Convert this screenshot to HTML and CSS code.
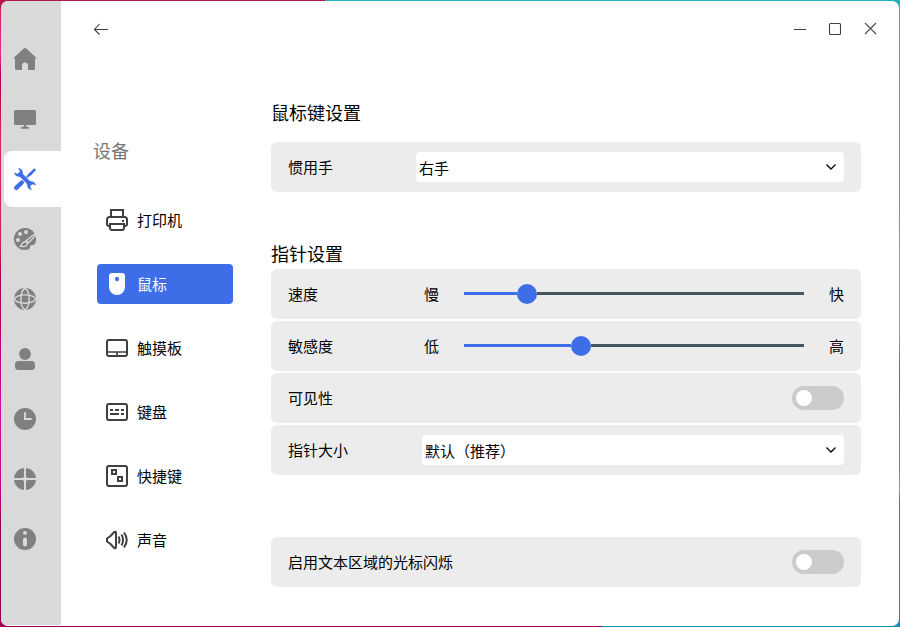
FILE: index.html
```html
<!DOCTYPE html>
<html lang="zh-CN">
<head>
<meta charset="utf-8">
<title>设备</title>
<link rel="stylesheet" href="styles.css">
</head>
<body>
<div class="window">
  <aside class="rail">
    <a class="tab"><svg width="24" height="24" viewBox="0 0 24 24"><path fill="currentColor" d="M12 1Q12.700 1 13.300 1.600L22.500 10q.800 1 .300 1.800L22 12v9.500a1.500 1.500 0 0 1-1.500 1.500H15v-4.500a3 3 0 0 0-6 0V23H3.500A1.500 1.500 0 0 1 2 21.500V12l-.800-.200Q.700 11 1.500 10l9.200-8.400Q11.300 1 12 1Z"/></svg></a>
    <a class="tab"><svg width="24" height="24" viewBox="0 0 24 24"><rect x="1" y="3" width="22" height="15" rx="1.500" fill="currentColor"/><path fill="currentColor" d="M11 18h2v1.500l3 .500v1.700H8V20l3-.500z"/></svg></a>
    <a class="tab active"><svg width="24" height="24" viewBox="0 0 24 24"><path d="M6 6 18 18" stroke="currentColor" stroke-width="4"/><path d="M3.200 20.800l5.600-5.300" stroke="currentColor" stroke-width="4.400" stroke-linecap="round"/><path d="m13.800 10.200 3-3" stroke="currentColor" stroke-width="2"/><path d="m16.500 5.700 4.800-4.500L23 2.700 18.500 8l-2.300 1.300-1.500-1.500Z" fill="currentColor"/><path d="M5 1A5 5 0 0 1 9.800 6.800L7 9.800A5.300 5.300 0 0 1 1 5.200L3.600 6.800 6.400 6 6.700 3.500ZM19 23a5 5 0 0 1-4.800-5.800l2.800-3A5.300 5.300 0 0 1 23 18.800l-2.600-1.600-2.800.800-.300 2.500Z" fill="currentColor"/></svg></a>
    <a class="tab"><svg width="24" height="24" viewBox="0 0 24 24"><path d="M12 1a11 11 0 1 0 4 21.200c1.700-.800.500-2.700 1.700-3.700 1.300-1 3.600.500 4.500-2.200A11 11 0 0 0 12 1Z" fill="currentColor"/><g class="cut"><circle cx="13" cy="5" r="2"/><circle cx="7" cy="7" r="2"/><circle cx="5" cy="13" r="2"/></g><path class="cutline" stroke-width="1.300" d="M23 6 13.300 13.500l2.200 2.200L23 8M12.500 14.500c-3-.300-3 3-5.300 4.700 3 1 7 .300 7.300-2.700Z"/></svg></a>
    <a class="tab"><svg width="24" height="24" viewBox="0 0 24 24"><circle cx="12" cy="12" r="11" fill="currentColor"/><g class="cutline" stroke-width="1.350"><ellipse cx="12" cy="12" rx="4.200" ry="10.300"/><ellipse cx="12" cy="12" rx="10.300" ry="4.200"/></g></svg></a>
    <a class="tab"><svg width="24" height="24" viewBox="0 0 24 24" fill="currentColor"><circle cx="12" cy="7" r="5.900"/><rect x="2" y="14" width="20" height="9" rx="3.500"/></svg></a>
    <a class="tab"><svg width="24" height="24" viewBox="0 0 24 24"><circle cx="12" cy="12" r="11" fill="currentColor"/><path class="cutline" stroke-width="1.900" stroke-linecap="round" d="M12 6v6h6"/></svg></a>
    <a class="tab"><svg width="24" height="24" viewBox="0 0 24 24"><circle cx="12" cy="12" r="11" fill="currentColor"/><path class="cutline" stroke-width="2" d="M12 1v22M1 12h22"/><circle class="cut" cx="12" cy="12" r="2.300"/></svg></a>
    <a class="tab"><svg width="24" height="24" viewBox="0 0 24 24"><circle cx="12" cy="12" r="11" fill="currentColor"/><g class="cut"><circle cx="12" cy="6" r="2"/><rect x="10" y="10.500" width="4" height="9" rx="2"/></g></svg></a>
  </aside>

  <main class="content">
    <header class="titlebar">
      <svg class="back" width="16" height="14" viewBox="0 0 16 14"><path d="M15 7.500H1.500M6.500 2 1.500 7.500 6.500 12.500"/></svg>
      <div class="controls">
        <svg width="14" height="14" viewBox="0 0 14 14"><path d="M1 7.500h12"/></svg>
        <svg width="14" height="14" viewBox="0 0 14 14"><rect x="1.500" y="1.500" width="11" height="11" rx="1"/></svg>
        <svg class="close" width="14" height="14" viewBox="0 0 14 14"><path d="m2 1 11 11m0-11-11 11"/></svg>
      </div>
    </header>

    <div class="columns">
      <nav class="nav">
        <h1>设备</h1>
        <a class="item"><svg width="24" height="24" viewBox="0 0 24 24"><path d="M6 9V2h12v7M5 18H4a2 2 0 0 1-2-2v-4.500A2.500 2.500 0 0 1 4.500 9h15a2.500 2.500 0 0 1 2.500 2.500V16a2 2 0 0 1-2 2h-1"/><path d="M5 16h14v4a2 2 0 0 1-2 2H7a2 2 0 0 1-2-2Z"/><path d="M17 13h2"/></svg><span>打印机</span></a>
        <a class="item selected"><svg width="24" height="24" viewBox="0 0 24 24"><path class="solid" d="M7 1h10a3 3 0 0 1 3 3v11a8 8 0 0 1-16 0V4a3 3 0 0 1 3-3Z"/><ellipse class="wheel" cx="12" cy="7" rx="2" ry="2.200"/></svg><span>鼠标</span></a>
        <a class="item"><svg width="24" height="24" viewBox="0 0 24 24"><rect x="2" y="4" width="20" height="16" rx="2"/><path stroke-width="1.700" d="M2 16h20M12 16v4"/></svg><span>触摸板</span></a>
        <a class="item"><svg width="24" height="24" viewBox="0 0 24 24"><rect x="2" y="4" width="20" height="16" rx="2"/><path d="M5 10h3M10 10h4M16 10h3M5 14h9M16 14h3"/></svg><span>键盘</span></a>
        <a class="item"><svg width="24" height="24" viewBox="0 0 24 24"><rect x="2" y="2" width="20" height="20" rx="2"/><rect x="7" y="6" width="4" height="4"/><rect x="13" y="13" width="4" height="4"/></svg><span>快捷键</span></a>
        <a class="item"><svg width="24" height="24" viewBox="0 0 24 24"><path stroke-linejoin="round" d="M5.500 8 9 4.200Q11 3 11 5v14q0 2-2 .800L5.500 16 2 13.500v-3Z"/><path d="M13.500 8.500q2 3.500 0 7M16.500 6.500q3 5.500 0 11M19 4.500q5.500 7.500 0 15"/></svg><span>声音</span></a>
      </nav>

      <div class="settings">
        <section class="group buttons">
          <h2>鼠标键设置</h2>
          <div class="row"><span class="label">惯用手</span><div class="select wide"><span>右手</span><svg width="12" height="8" viewBox="0 0 12 8"><path d="m1.500 1.500 4.500 4.500 4.500-4.500"/></svg></div></div>
        </section>
        <section class="group pointer">
          <h2>指针设置</h2>
          <div class="row"><span class="label">速度</span><span class="low">慢</span><div class="slider speed"><i class="fill"></i><b class="knob"></b><i class="rest"></i></div><span class="high">快</span></div>
          <div class="row"><span class="label">敏感度</span><span class="low">低</span><div class="slider sense"><i class="fill"></i><b class="knob"></b><i class="rest"></i></div><span class="high">高</span></div>
          <div class="row"><span class="label">可见性</span><div class="toggle"><i></i></div></div>
          <div class="row"><span class="label">指针大小</span><div class="select"><span>默认（推荐）</span><svg width="12" height="8" viewBox="0 0 12 8"><path d="m1.500 1.500 4.500 4.500 4.500-4.500"/></svg></div></div>
        </section>
        <section class="group">
          <div class="row"><span class="label">启用文本区域的光标闪烁</span><div class="toggle"><i></i></div></div>
        </section>
      </div>
    </div>
  </main>
</div>
</body>
</html>
```
FILE: styles.css
```css
* { box-sizing: border-box; }

body {
  margin: 0;
  height: 627px;
  padding: 1px;
  overflow: hidden;
  font: 15px/22px "Noto Sans CJK SC", sans-serif;
  color: #000;
  background:
    linear-gradient(90deg, #b01550 0 325px, #26b0b8 325px) top / 100% 8px no-repeat,
    linear-gradient(90deg, #a00058 0 602px, #1095b5 602px) bottom / 100% 8px no-repeat,
    linear-gradient(#2bb0b8 0 200px, #a8a070 270px 330px, #4d7080 375px, #c06848 420px 470px, #b59a60 490px, #1090b0 500px) right / 8px 100% no-repeat,
    linear-gradient(#c81e58, #e0309a 55px, #b00055 75px, #d4285f 140px, #c02060 250px, #a0004f 280px, #d00c9c 400px, #c80c90 480px, #950050 530px);
}

h1, h2 {
  margin: 0;
  font-size: 18px;
  font-weight: 400;
  line-height: 26px;
}

svg { display: block; flex: none; }

.window {
  display: flex;
  height: 625px;
  border-radius: 7px;
  overflow: hidden;
  background: #fff;
}

.rail {
  display: flex;
  flex-direction: column;
  gap: 4px;
  width: 60px;
  height: 624px;
  padding: 30px 0 0 3px;
  background: #d9d9d9;
  color: #808080;
}

.tab {
  display: flex;
  align-items: center;
  height: 56px;
  padding-left: 9px;
  border-radius: 8px 0 0 8px;
}

.tab.active { background: #fff; color: #3d6de7; }
.cut { fill: #d9d9d9; }
.cutline { fill: none; stroke: #d9d9d9; }

.content { flex: 1; }

.titlebar {
  display: flex;
  justify-content: space-between;
  align-items: center;
  height: 56px;
  padding: 0 22px 0 32px;
}

.titlebar svg { fill: none; stroke: #404040; stroke-width: 1.100; }
.controls { display: flex; gap: 21px; }
.titlebar .close { stroke: #505050; stroke-width: 1.200; }

.columns { display: flex; }

.nav {
  width: 210px;
  padding: 80px 38px 0 36px;
}

.nav h1 {
  margin: 0 0 37px -4px;
  color: #777;
}

.item {
  display: flex;
  align-items: center;
  gap: 8px;
  height: 40px;
  margin-bottom: 24px;
  padding-left: 8px;
  border-radius: 4px;
}

.item svg { fill: none; stroke: #404040; stroke-width: 2; }
.item.selected { background: #3d6de7; color: #fff; }
.item .solid { fill: #fff; stroke: none; }
.item .wheel { fill: #3d6de7; stroke: none; }

.settings { width: 590px; padding-top: 42px; }
.group.buttons h2 { margin-bottom: 17px; }
.group.buttons { margin-bottom: 48px; }
.group.pointer { margin-bottom: 62px; }
.group.pointer h2 { margin-bottom: 3px; }

.row {
  display: flex;
  align-items: center;
  height: 50px;
  padding: 0 17px;
  border-radius: 6px;
  background: #ececec;
}

.row + .row { margin-top: 2px; }
.label { flex: 1; }

.select {
  display: flex;
  justify-content: space-between;
  align-items: center;
  width: 422px;
  height: 30px;
  padding: 2px 7px 0 3px;
  border-radius: 4px;
  background: #fff;
}

.select.wide { width: 428px; }
.select svg { margin-top: -2px; fill: none; stroke: #000; stroke-width: 1.300; }

.low { margin-right: 25px; }
.high { margin-left: 25px; }

.slider {
  display: flex;
  align-items: center;
  width: 340px;
  height: 20px;
}

.slider .fill,
.slider .rest { height: 3px; margin-top: -1px; }
.slider .fill { background: #3d6de7; }
.slider .rest { flex: 1; background: #465660; }
.speed .fill { width: 53px; }
.sense .fill { width: 107px; }

.knob {
  width: 20px;
  height: 20px;
  border-radius: 50%;
  background: #3d6de7;
}

.toggle {
  width: 52px;
  height: 24px;
  padding: 4px;
  border-radius: 12px;
  background: #cbcbcb;
}

.toggle i {
  display: block;
  width: 16px;
  height: 16px;
  border-radius: 50%;
  background: #fff;
}
```
